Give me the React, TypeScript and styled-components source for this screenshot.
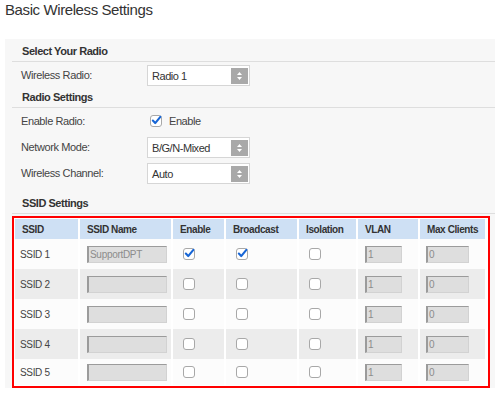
import React from "react";
import styled, { createGlobalStyle } from "styled-components";

const GlobalStyle = createGlobalStyle`
  html, body { margin: 0; padding: 0; background: #ffffff; }
  body {
    font-family: "Liberation Sans", Arial, Helvetica, sans-serif;
    color: #444;
  }
`;

const Page = styled.div`
  width: 495px;
  padding-left: 5px;
  box-sizing: border-box;
`;

const Title = styled.h1`
  margin: 0;
  height: 39px;
  font-size: 15px;
  letter-spacing: -0.4px;
  line-height: 20px;
  font-weight: normal;
  color: #333;
`;

const Panel = styled.div`
  background: #f7f7f7;
  padding-top: 3px;
`;

const SectionTitle = styled.div<{ $spaced?: boolean }>`
  margin: ${(p) => (p.$spaced ? "8px" : "0")} 0 0 7px;
  padding-left: 10px;
  height: 19px;
  line-height: 19px;
  border-bottom: 1px solid #dedede;
  font-size: 11px;
  letter-spacing: -0.45px;
  font-weight: bold;
  color: #333;
`;

const FieldRow = styled.div`
  display: flex;
  align-items: center;
  height: 26px;
  padding-left: 16px;
`;

const FieldLabel = styled.div`
  width: 126px;
  font-size: 11px;
  letter-spacing: -0.4px;
  color: #444;
`;

const SelectBox = styled.div`
  display: flex;
  align-items: stretch;
  box-sizing: border-box;
  width: 103px;
  height: 21px;
  background: #fff;
  border: 1px solid #d6d6d6;
  padding: 2px 1px 1px 0;
`;

const SelectText = styled.div`
  flex: 1;
  padding-left: 4px;
  font-size: 11px;
  letter-spacing: -0.45px;
  line-height: 16px;
  color: #333;
`;

const SelectArrow = styled.div`
  width: 17px;
  background: #a9a9a9;
  display: flex;
  align-items: center;
  justify-content: center;
`;

const CheckLine = styled.label`
  display: flex;
  align-items: center;
  gap: 7px;
  margin-left: 3px;
  font-size: 11px;
  letter-spacing: -0.45px;
  color: #444;
`;

const Box = styled.span<{ $inCell?: boolean }>`
  display: inline-flex;
  align-items: center;
  justify-content: center;
  box-sizing: border-box;
  width: 12px;
  height: 12px;
  border: 1px solid #a8a8a8;
  border-radius: 3px;
  background: #fff;
  margin-left: ${(p) => (p.$inCell ? "3px" : "0")};
  vertical-align: middle;
  overflow: visible;
`;

const RedFrame = styled.div`
  margin: 2px 5px 0 7px;
  border: 2px solid #ff0000;
  padding: 1px 3px 1px 1px;
  background: #fff;
`;

const Table = styled.table`
  width: 470px;
  border-collapse: collapse;
  table-layout: fixed;
`;

const HeadCell = styled.th`
  height: 20px;
  padding: 0 0 0 7px;
  background: #cee0f4;
  border-right: 2px solid #fff;
  text-align: left;
  font-size: 10px;
  letter-spacing: -0.4px;
  font-weight: bold;
  color: #333;
  white-space: nowrap;
  &:last-child { border-right: none; }
`;

const BodyRow = styled.tr<{ $shade: boolean }>`
  height: 30px;
  background: ${(p) => (p.$shade ? "#ececec" : "#fcfcfc")};
  &:last-child { height: 26px; }
`;

const Cell = styled.td<{ $pad?: number }>`
  padding: 0 0 0 ${(p) => p.$pad ?? 7}px;
  border-right: 2px solid #fff;
  font-size: 10px;
  letter-spacing: -0.35px;
  color: #444;
  vertical-align: middle;
  &:last-child { border-right: none; }
`;

const FieldInput = styled.div<{ $w: number }>`
  box-sizing: border-box;
  width: ${(p) => p.$w}px;
  height: 17px;
  background: #dedede;
  border-style: solid;
  border-width: 1px 1px 1px 2px;
  border-color: #9b9b9b #d2d2d2 #d2d2d2 #9b9b9b;
  padding-left: 1px;
  font-size: 10px;
  letter-spacing: -0.3px;
  line-height: 15px;
  color: #8c8c8c;
  overflow: hidden;
  white-space: nowrap;
`;

const ArrowIcon = () => (
  <svg width="7" height="10" viewBox="0 0 7 10">
    <path d="M3.5 1 L6 4 L1 4 Z" fill="#fff" />
    <path d="M1 6 L6 6 L3.5 9 Z" fill="#fff" />
  </svg>
);

const CheckMark = () => (
  <svg width="12" height="11" viewBox="0 0 12 11" style={{ marginTop: -1, marginRight: -1 }}>
    <path d="M2 5.6 L4.6 8.3 L10.2 1.6" fill="none" stroke="#1766d6" strokeWidth="2.3" strokeLinecap="round" strokeLinejoin="round" />
  </svg>
);

const Checkbox = ({ checked, inCell }: { checked?: boolean; inCell?: boolean }) => (
  <Box $inCell={inCell}>{checked ? <CheckMark /> : null}</Box>
);

const Select = ({ value }: { value: string }) => (
  <SelectBox>
    <SelectText>{value}</SelectText>
    <SelectArrow>
      <ArrowIcon />
    </SelectArrow>
  </SelectBox>
);

type Ssid = { id: number; name: string; enable: boolean; broadcast: boolean };

const ssids: Ssid[] = [
  { id: 1, name: "SupportDPT", enable: true, broadcast: true },
  { id: 2, name: "", enable: false, broadcast: false },
  { id: 3, name: "", enable: false, broadcast: false },
  { id: 4, name: "", enable: false, broadcast: false },
  { id: 5, name: "", enable: false, broadcast: false },
];

const columns: { label: string; width: number }[] = [
  { label: "SSID", width: 64 },
  { label: "SSID Name", width: 93 },
  { label: "Enable", width: 53 },
  { label: "Broadcast", width: 73 },
  { label: "Isolation", width: 59 },
  { label: "VLAN", width: 62 },
  { label: "Max Clients", width: 66 },
];

export default function App() {
  return (
    <>
      <GlobalStyle />
      <Page>
        <Title>Basic Wireless Settings</Title>
        <Panel>
          <SectionTitle>Select Your Radio</SectionTitle>
          <FieldRow>
            <FieldLabel>Wireless Radio:</FieldLabel>
            <Select value="Radio 1" />
          </FieldRow>
          <SectionTitle>Radio Settings</SectionTitle>
          <FieldRow>
            <FieldLabel>Enable Radio:</FieldLabel>
            <CheckLine>
              <Checkbox checked />
              Enable
            </CheckLine>
          </FieldRow>
          <FieldRow>
            <FieldLabel>Network Mode:</FieldLabel>
            <Select value="B/G/N-Mixed" />
          </FieldRow>
          <FieldRow>
            <FieldLabel>Wireless Channel:</FieldLabel>
            <Select value="Auto" />
          </FieldRow>
          <SectionTitle $spaced>SSID Settings</SectionTitle>
          <RedFrame>
            <Table>
              <colgroup>
                {columns.map((c) => (
                  <col key={c.label} style={{ width: c.width }} />
                ))}
              </colgroup>
              <thead>
                <tr>
                  {columns.map((c) => (
                    <HeadCell key={c.label}>{c.label}</HeadCell>
                  ))}
                </tr>
              </thead>
              <tbody>
                {ssids.map((s, i) => (
                  <BodyRow key={s.id} $shade={i % 2 === 1}>
                    <Cell $pad={5}>SSID {s.id}</Cell>
                    <Cell>
                      <FieldInput $w={80}>{s.name}</FieldInput>
                    </Cell>
                    <Cell>
                      <Checkbox checked={s.enable} inCell />
                    </Cell>
                    <Cell>
                      <Checkbox checked={s.broadcast} inCell />
                    </Cell>
                    <Cell>
                      <Checkbox inCell />
                    </Cell>
                    <Cell>
                      <FieldInput $w={37}>1</FieldInput>
                    </Cell>
                    <Cell $pad={6}>
                      <FieldInput $w={43}>0</FieldInput>
                    </Cell>
                  </BodyRow>
                ))}
              </tbody>
            </Table>
          </RedFrame>
        </Panel>
      </Page>
    </>
  );
}
